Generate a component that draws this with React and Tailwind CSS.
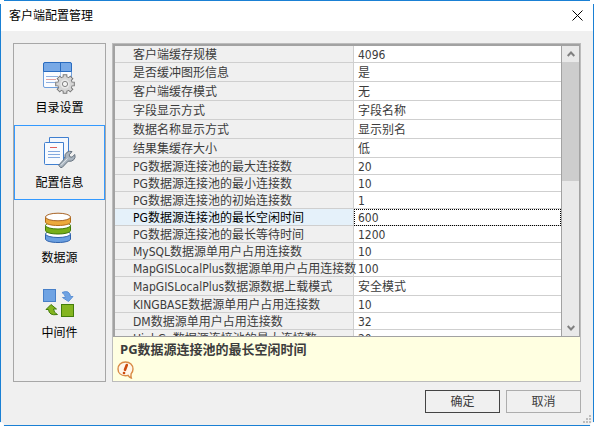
import React, { useState } from 'react';

const rows = [
    { name: '客户端缓存规模', value: '4096' },
    { name: '是否缓冲图形信息', value: '是', tall: true },
    { name: '客户端缓存模式', value: '无', tall: true },
    { name: '字段显示方式', value: '字段名称', tall: true },
    { name: '数据名称显示方式', value: '显示别名', tall: true },
    { name: '结果集缓存大小', value: '低', tall: true },
    { name: 'PG数据源连接池的最大连接数', value: '20' },
    { name: 'PG数据源连接池的最小连接数', value: '10' },
    { name: 'PG数据源连接池的初始连接数', value: '1' },
    { name: 'PG数据源连接池的最长空闲时间', value: '600' },
    { name: 'PG数据源连接池的最长等待时间', value: '1200' },
    { name: 'MySQL数据源单用户占用连接数', value: '10' },
    { name: 'MapGISLocalPlus数据源单用户占用连接数', value: '100' },
    { name: 'MapGISLocalPlus数据源数据上载模式', value: '安全模式', tall: true },
    { name: 'KINGBASE数据源单用户占用连接数', value: '10' },
    { name: 'DM数据源单用户占用连接数', value: '32' },
    { name: 'HighGo数据源连接池的最大连接数', value: '20' },
];

const CatalogIcon = () => (
    <svg width="33" height="34" viewBox="8 5 33 34" aria-hidden="true">
        <rect x="8.5" y="7.5" width="28" height="25" rx="1.5" fill="#fafcff" stroke="#6f9fdc" />
        <path d="M8.5 16.5v-7.5q0-1.5 1.5-1.5h25q1.5 0 1.5 1.5v7.5z" fill="#78a9e6" stroke="#2a6cc0" />
        <path d="M25.5 7.5v9" stroke="#2a6cc0" />
        <path d="M25.5 17v15" stroke="#a9c6ec" />
        <path d="M11 21.5h12M11 27.5h9" stroke="#8fb1e0" />
        <path d="M11 24.5h10" stroke="#e2a2a0" />
        <path d="M30 19.200v19.600M20.200 29h19.600M23.100 22.100l13.800 13.800M36.900 22.100l-13.800 13.800" stroke="#777" strokeWidth="4.600" />
        <circle cx="30" cy="29" r="7.700" fill="#777" />
        <path d="M30 20.200v17.600M21.200 29h17.600M23.800 22.800l12.400 12.400M36.200 22.800l-12.400 12.400" stroke="#d6d6d6" strokeWidth="2.800" />
        <circle cx="30" cy="29" r="6.900" fill="#d6d6d6" />
        <circle cx="30" cy="29" r="4.600" fill="#e8e8e8" />
        <circle cx="30" cy="29" r="2.600" fill="#f4f4f4" stroke="#858585" />
    </svg>
);

const ConfigIcon = () => (
    <svg width="33" height="34" viewBox="8 3 33 34" aria-hidden="true">
        <path d="M14.5 5.5h19v20h-19z" fill="#f3f7fd" stroke="#3f7fd0" />
        <path d="M10.5 10.5h18v22h-18q-1 0-1-1v-20q0-1 1-1z" fill="#f8fbff" stroke="#3f7fd0" />
        <path d="M15 15.5h7" stroke="#e0605c" />
        <path d="M13 19.5h12M13 22.5h12M13 25.5h12" stroke="#83a9de" />
        <path
            d="M25.500 35.500l-1.800-2.300 6.300-7q-.8-4 2-6 2.300-1.500 5-.6l-2.800 3.200.6 2 2.200.4 2.800-2.700q1 3-1 5.200-2.300 2.200-5.600 1.500l-6 6.200z"
            fill="#aab5c0"
            stroke="#65717d"
        />
        <path d="M26 33.300l6.500-6.800" stroke="#dde3e8" />
    </svg>
);

const DatabaseIcon = () => (
    <svg width="33" height="34" viewBox="8 2 33 34" aria-hidden="true">
        <path d="M10.5 26v5c0 2 5.5 3.500 12.500 3.500s12.500-1.500 12.500-3.500v-5z" fill="#6a9fe0" stroke="#2f62ac" />
        <ellipse cx="23" cy="26" rx="12.500" ry="3.500" fill="#fff" stroke="#2f62ac" />
        <path d="M10.500 17.500v5c0 2 5.500 3.500 12.500 3.500s12.500-1.500 12.500-3.500v-5z" fill="#78ae18" stroke="#417a08" />
        <ellipse cx="23" cy="17.500" rx="12.500" ry="3.500" fill="#fff" stroke="#417a08" />
        <path d="M10.500 9v5c0 2 5.500 3.500 12.500 3.500s12.500-1.500 12.500-3.500v-5z" fill="#eba93c" stroke="#b36b18" />
        <ellipse cx="23" cy="9" rx="12.500" ry="3.800" fill="#fff" stroke="#a86425" />
    </svg>
);

const MiddlewareIcon = () => (
    <svg width="33" height="34" viewBox="8 2 33 34" aria-hidden="true">
        <rect x="8.500" y="6.500" width="12" height="12" fill="#6fa3e3" stroke="#477fc8" />
        <rect x="26.500" y="21.500" width="12" height="12" fill="#84b520" stroke="#437d0a" />
        <path d="M27 9.500q7.500-3 8.500 4h2.500l-4.500 5-6-4h3q-.3-3-3.500-5z" fill="#6fa3e3" stroke="#5c90d4" />
        <path d="M22.500 31.500q-8.500 1.500-9-5h-2.500l5-5 5.500 4.500h-3q.3 4 4 5.500z" fill="#84b520" stroke="#437d0a" />
    </svg>
);

const HintIcon = () => (
    <svg width="18" height="18" viewBox="0 0 18 18" aria-hidden="true">
        <path
            d="M8.500 1C4 1 1 4 1 8s3 6.700 7.500 6.700q1.500 0 2.600-.4 1.200 2.200 3.200 2.700-.6-2-.2-4.200Q16 11 16 8c0-4-3-7-7.500-7z"
            fill="#fff6ea"
            stroke="#d98a45"
            strokeWidth="1.400"
        />
        <path d="M9.800 4L8 8.800" stroke="#cc4a0c" strokeWidth="2.600" strokeLinecap="round" />
        <circle cx="7" cy="12" r="1.300" fill="#cc4a0c" />
    </svg>
);

const sections = [
    { label: '目录设置', Icon: CatalogIcon },
    { label: '配置信息', Icon: ConfigIcon },
    { label: '数据源', Icon: DatabaseIcon },
    { label: '中间件', Icon: MiddlewareIcon },
];

const App = () => {
    const [section, setSection] = useState('配置信息');
    const [selected, setSelected] = useState('PG数据源连接池的最长空闲时间');

    return (
        <div className="relative flex h-screen flex-col border border-[#1a80d4] bg-[#f0f0f0] font-['Open_Sans','Noto_Sans_CJK_SC',sans-serif] text-xs text-[#3c3c3c]">
            {/* Cut window corners */}
            <span className="absolute -top-px -left-px size-1 bg-white"></span>
            <span className="absolute -top-px -right-px size-1 bg-white"></span>
            <span className="absolute -bottom-px -left-px size-1 rounded-tr-full bg-white"></span>
            <span className="absolute -right-px -bottom-px size-1 rounded-tl-full bg-white"></span>

            {/* Title bar */}
            <header className="flex h-[30px] shrink-0 items-center justify-between bg-white pr-2.5 pl-2 text-black">
                <h1>客户端配置管理</h1>
                <button aria-label="关闭" className="flex pb-0.5">
                    <svg width="11" height="11" viewBox="0 0 11 11" aria-hidden="true">
                        <path d="M.5.5l10 10M10.500.5l-10 10" stroke="#000" />
                    </svg>
                </button>
            </header>

            <main className="flex min-h-0 flex-1 gap-1.5 px-3 pt-3">
                {/* Sections */}
                <nav className="flex w-[93px] shrink-0 flex-col border border-[#a7a7a7] pt-1.5">
                    {sections.map(({ label, Icon }) => (
                        <button
                            key={label}
                            onClick={() => setSection(label)}
                            className={`flex h-[75px] flex-col items-center gap-1.5 border pt-[9px] leading-4 text-black ${section === label ? 'border-[#3399ff]' : 'border-transparent'}`}
                        >
                            <Icon />
                            <span>{label}</span>
                        </button>
                    ))}
                </nav>

                <div className="flex min-w-0 flex-1 flex-col border border-[#bcbcbc]">
                    {/* Property grid */}
                    <div className="flex min-h-0 flex-1 border-t-2 border-r border-b border-l-2 border-[#a2a2a2]">
                        <div className="min-w-0 flex-1 overflow-hidden bg-white">
                            <table className="w-full table-fixed border-separate border-spacing-0 font-['DejaVu_Sans_Condensed','Noto_Sans_CJK_SC',sans-serif] leading-[13px]">
                                <colgroup>
                                    <col className="w-[239px]" />
                                    <col />
                                </colgroup>
                                <tbody>
                                    {rows.map((row) => (
                                        <tr key={row.name} onClick={() => setSelected(row.name)} className={row.tall ? 'h-[19px]' : 'h-[17px]'}>
                                            <th
                                                scope="row"
                                                className={`border-r border-b border-[#cfcfcf] p-0 pt-[3px] pl-[18px] text-left font-normal whitespace-nowrap ${selected === row.name ? 'bg-[#e5f1fa] text-black' : 'bg-[#f0f0f0]'}`}
                                            >
                                                {row.name}
                                            </th>
                                            <td
                                                className={`border-b border-[#cfcfcf] p-0 pt-[3px] pl-1 whitespace-nowrap ${selected === row.name ? 'outline-1 -outline-offset-1 outline-dotted outline-black' : ''}`}
                                            >
                                                {row.value}
                                            </td>
                                        </tr>
                                    ))}
                                </tbody>
                            </table>
                        </div>

                        {/* Scroll bar */}
                        <div className="flex w-[18px] shrink-0 flex-col border-l border-[#a2a2a2] bg-[#e9e9e9]">
                            <button aria-label="向上" className="flex h-4 items-center justify-center">
                                <svg width="8" height="6" viewBox="0 0 8 6" aria-hidden="true">
                                    <path d="M.7 5L4 1.500 7.300 5" fill="none" stroke="#808080" strokeWidth="2" />
                                </svg>
                            </button>
                            <div className="flex-1">
                                <div className="h-[46%] bg-[#cdcdcd]"></div>
                            </div>
                            <button aria-label="向下" className="flex h-4 items-center justify-center">
                                <svg width="8" height="6" viewBox="0 0 8 6" aria-hidden="true">
                                    <path d="M.7 1L4 4.500 7.300 1" fill="none" stroke="#808080" strokeWidth="2" />
                                </svg>
                            </button>
                        </div>
                    </div>

                    {/* Description */}
                    <div className="h-11 shrink-0 bg-[#ffffe1] pt-1 pl-1">
                        <p className="pl-[3px] text-[13px] leading-4 font-bold">{selected}</p>
                        <div className="pt-1">
                            <HintIcon />
                        </div>
                    </div>
                </div>
            </main>

            <footer className="flex shrink-0 justify-end gap-1.5 px-3 pt-2 pb-3">
                <button className="h-[23px] w-[75px] border border-[#444]">确定</button>
                <button className="h-[23px] w-[75px] border border-[#adadad]">取消</button>
            </footer>

            {/* Resize grip */}
            <svg className="absolute right-0.5 bottom-0.5" width="8" height="8" viewBox="0 0 8 8" aria-hidden="true">
                <path d="M6 0h2v2h-2zM3 3h2v2h-2zM6 3h2v2h-2zM0 6h2v2h-2zM3 6h2v2h-2zM6 6h2v2h-2z" fill="#bdbdbd" />
            </svg>
        </div>
    );
};

export default App;
